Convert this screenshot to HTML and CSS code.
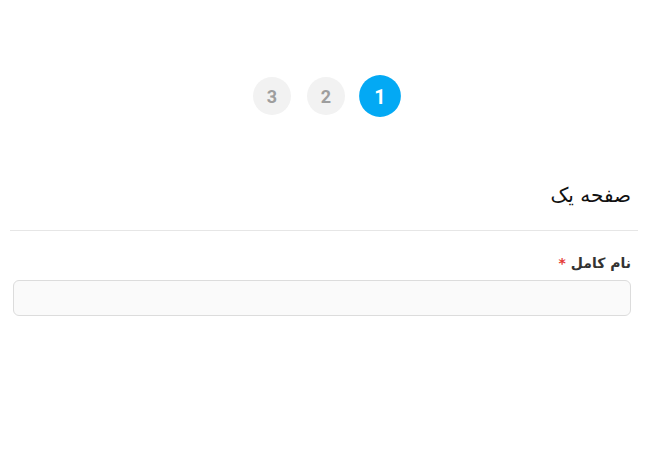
FILE: index.html
```html
<!DOCTYPE html>
<html lang="fa" dir="rtl">
  <head>
    <meta charset="UTF-8" />
    <meta name="viewport" content="width=device-width, initial-scale=1.0" />
    <title>فرم چند مرحله‌ای</title>
    <link rel="stylesheet" href="styles.css">
  </head>
  <body>
    <div class="container">
      <div class="steps">
        <div class="step active">1</div>
        <div class="step">2</div>
        <div class="step">3</div>
      </div>

      <div class="page">
        <h2 class="page-title">صفحه یک</h2>
        <div class="field">
          <label for="full-name">نام کامل <span class="required">*</span></label>
          <input type="text" id="full-name" />
        </div>
      </div>
    </div>
  </body>
</html>
```

FILE: styles.css
```css
body {
  font-family: "DejaVu Sans", sans-serif;
  margin: 0;
  padding: 0;
  background-color: #fff;
  color: #222;
}
.container {
  padding: 0 12px 0 10px;
}
.steps {
  display: flex;
  justify-content: center;
  gap: 16px;
  padding-top: 77px;
  padding-left: 4px;
}
.step {
  width: 38px;
  height: 38px;
  border-radius: 50%;
  background-color: #f2f2f2;
  color: #9e9e9e;
  font-family: Roboto, sans-serif;
  font-weight: bold;
  font-size: 18px;
  display: flex;
  justify-content: center;
  align-items: center;
}
.step.active {
  background-color: #03a9f4;
  color: white;
  transform: scale(1.1);
}
.page {
  margin-top: 68px;
}
.page-title {
  margin: 0;
  padding: 0 7px 23px;
  font-size: 20px;
  font-weight: normal;
  color: #111;
  border-bottom: 1px solid #e6e6e6;
}
.field {
  padding: 24px 7px 0 3px;
}
label {
  display: block;
  font-size: 14px;
  font-weight: bold;
  color: #333;
  margin-bottom: 9px;
}
.required {
  color: #e53935;
}
input {
  display: block;
  width: 100%;
  box-sizing: border-box;
  height: 36px;
  border: 1px solid #dcdcdc;
  border-radius: 6px;
  background-color: #fafafa;
}
```
